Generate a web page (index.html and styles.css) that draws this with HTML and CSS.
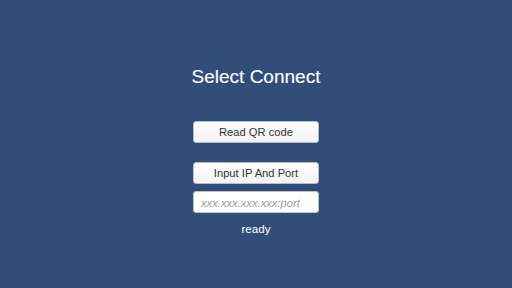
FILE: index.html
```html
<!DOCTYPE html>
<html>
<head>
<meta charset="utf-8">
<link rel="stylesheet" href="styles.css">
</head>
<body>
<div class="screen">
  <h1 class="title">Select Connect</h1>
  <button class="btn btn-qr">Read QR code</button>
  <button class="btn btn-ip">Input IP And Port</button>
  <input class="field" type="text" placeholder="xxx.xxx.xxx.xxx:port">
  <div class="status">ready</div>
</div>
</body>
</html>
```
FILE: styles.css
```css
html, body {
  margin: 0;
  padding: 0;
  width: 512px;
  height: 288px;
  overflow: hidden;
  background: #314e7a;
}
.screen {
  display: flex;
  flex-direction: column;
  align-items: center;
  padding-top: 66px;
  font-family: "Liberation Sans", Arial, sans-serif;
}
.title {
  margin: 0;
  font-size: 19px;
  line-height: 22px;
  font-weight: normal;
  color: #ffffff;
  -webkit-text-stroke: 0.1px #ffffff;
}
.btn {
  box-sizing: border-box;
  width: 126px;
  height: 22px;
  margin: 0;
  padding: 1px 0 0;
  border: 1px solid #bdbdbd;
  border-radius: 3px;
  background: linear-gradient(#ffffff, #f3f3f3);
  font-family: "Liberation Sans", Arial, sans-serif;
  font-size: 11.2px;
  color: #323232;
  line-height: 19px;
}
.btn-qr {
  margin-top: 33px;
}
.btn-ip {
  margin-top: 19px;
}
.field {
  box-sizing: border-box;
  width: 126px;
  height: 22px;
  margin-top: 7px;
  padding: 1px 7px 0;
  border: 1px solid #c4c4c4;
  border-radius: 3px;
  background: #ffffff;
  font-family: "Liberation Sans", Arial, sans-serif;
  font-size: 11.2px;
  color: #323232;
  outline: none;
}
.field::placeholder {
  color: #a0a0a0;
  font-style: italic;
}
.status {
  margin-top: 9px;
  font-size: 11.6px;
  line-height: 14px;
  color: #ffffff;
}
```
